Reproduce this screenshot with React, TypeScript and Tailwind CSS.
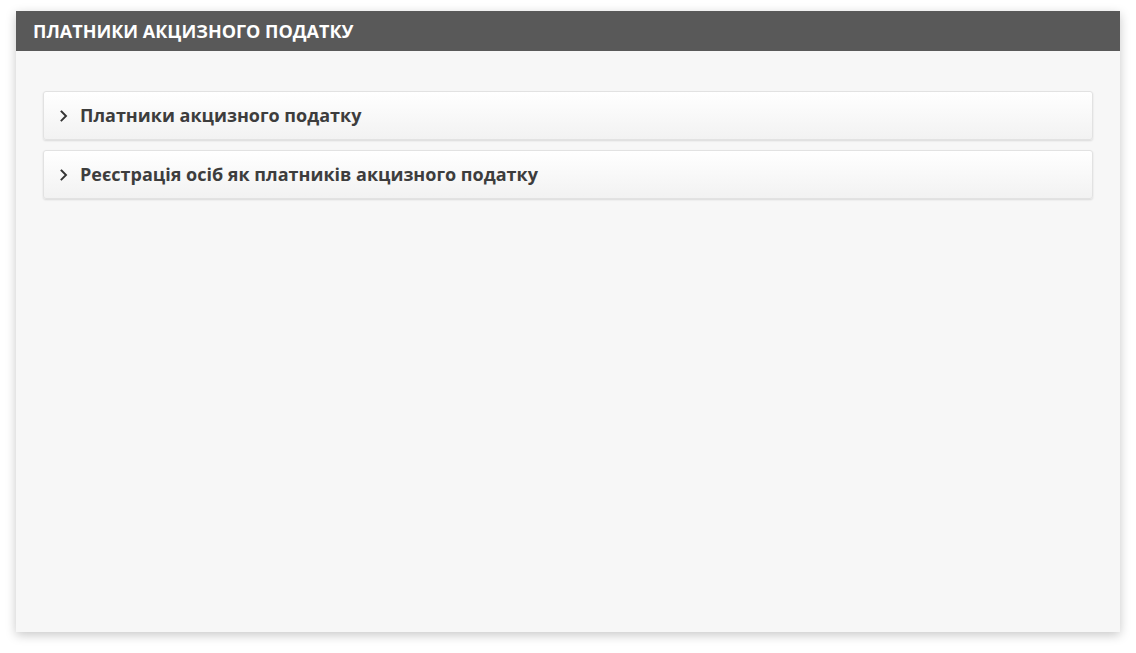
import React from "react";

function Chevron() {
  return (
    <svg width="10" height="16" viewBox="0 0 10 16" className="shrink-0">
      <path d="M2.5 3.5 L7 8 L2.5 12.5" fill="none" stroke="#333" strokeWidth="1.9" strokeLinecap="square" />
    </svg>
  );
}

function Item({ label }: { label: string }) {
  return (
    <div className="flex h-[49px] items-center gap-[11px] rounded-[3px] border border-[#e2e2e2] bg-gradient-to-b from-[#ffffff] to-[#f2f2f2] pl-[15px] shadow-[0_1px_2px_rgba(0,0,0,0.12)]">
      <Chevron />
      <span className="text-[18px] font-bold text-[#3d3d3d]" style={{ fontFamily: '"Open Sans", sans-serif' }}>
        {label}
      </span>
    </div>
  );
}

export default function App() {
  return (
    <div className="min-h-[653px] bg-white pt-[11px] pl-[16px] pr-[16px]" style={{ fontFamily: '"Open Sans", sans-serif' }}>
      <div className="flex h-[621px] w-[1104px] flex-col bg-[#f7f7f7] shadow-[0_3px_10px_rgba(0,0,0,0.22)]">
        <div className="flex h-[40px] items-center bg-[#595959] pl-[17px]">
          <span className="text-[18px] font-bold uppercase text-white">Платники акцизного податку</span>
        </div>
        <div className="flex flex-col gap-[10px] px-[27px] pt-[40px]">
          <Item label="Платники акцизного податку" />
          <Item label="Реєстрація осіб як платників акцизного податку" />
        </div>
      </div>
    </div>
  );
}
